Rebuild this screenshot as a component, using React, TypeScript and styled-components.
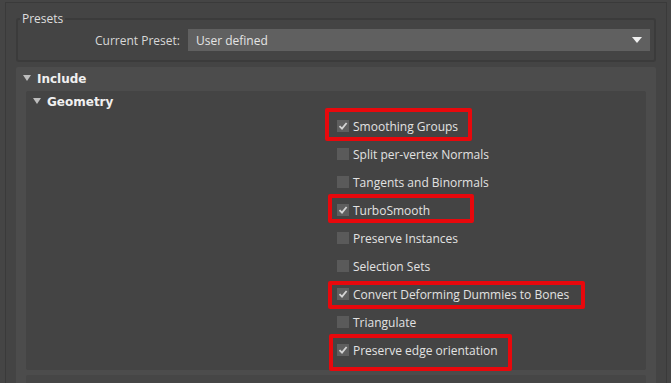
import React from "react";
import styled, { createGlobalStyle } from "styled-components";

const Global = createGlobalStyle`
  html, body { margin: 0; padding: 0; background: #444444; }
  body { font-family: "Open Sans", "Liberation Sans", sans-serif; }
  * { box-sizing: border-box; }
`;

const Page = styled.div`
  width: 671px;
  height: 383px;
  overflow: hidden;
  padding: 2px 4px 0 5px;
  background: #454545;
`;

const Frame = styled.div`
  height: 100%;
  border: 1px solid #3a3a3a;
  border-bottom: none;
  background: #444444;
  padding: 9px 10px 0 10px;
  display: flex;
  flex-direction: column;
  gap: 5px;
`;

const Group = styled.fieldset`
  margin: 0;
  padding: 3px 4px 9px 10px;
  border: 2px solid #3b3b3b;
  border-radius: 3px;
  min-width: 0;
`;

const Legend = styled.legend`
  color: #dedede;
  font-size: 12px;
  padding: 0 2px;
  margin-left: -8px;
  line-height: 14px;
`;

const PresetRow = styled.div`
  display: flex;
  align-items: center;
  gap: 8px;
  padding-left: 67px;
`;

const FieldLabel = styled.span`
  color: #d8d8d8;
  font-size: 12px;
`;

const Select = styled.div`
  flex: 1;
  height: 22px;
  background: #606060;
  display: flex;
  align-items: center;
  justify-content: space-between;
  padding: 0 8px 0 8px;
  color: #e4e4e4;
  font-size: 12px;
`;

const Rollout = styled.div<{ $bg: string }>`
  background: ${(p) => p.$bg};
  border-radius: 2px;
  display: flex;
  flex-direction: column;
`;

const IncludeBody = styled.div`
  padding: 0 10px;
  display: flex;
  flex-direction: column;
  gap: 5px;
`;

const Header = styled.div<{ $h: number; $pl: number }>`
  height: ${(p) => p.$h}px;
  display: flex;
  align-items: center;
  gap: 6px;
  padding-left: ${(p) => p.$pl}px;
  color: #f0f0f0;
  font-family: "DejaVu Sans", Verdana, sans-serif;
  font-weight: bold;
  font-size: 12px;
`;

const Tri = styled.span`
  width: 0;
  height: 0;
  border-left: 4px solid transparent;
  border-right: 4px solid transparent;
  border-top: 6px solid #bdbdbd;
  margin-top: -2px;
`;

const List = styled.div`
  display: flex;
  flex-direction: column;
  padding: 0 0 6px 311px;
`;

const Row = styled.div`
  position: relative;
  height: 28px;
  display: flex;
  align-items: center;
  gap: 4px;
  color: #e2e2e2;
  font-size: 12px;
`;

const Box = styled.span<{ $on: boolean }>`
  width: 12px;
  height: 12px;
  background: ${(p) => (p.$on ? "#5f5f5f" : "#5a5a5a")};
  display: flex;
  align-items: center;
  justify-content: center;
`;

const Mark = styled.div<{ $l: number; $t: number; $w: number; $h: number }>`
  position: absolute;
  left: ${(p) => p.$l}px;
  top: ${(p) => p.$t}px;
  width: ${(p) => p.$w}px;
  height: ${(p) => p.$h}px;
  border: 4px solid #e8080c;
  border-radius: 2px;
  pointer-events: none;
`;

const NextPanel = styled.div`
  height: 20px;
  background: #464646;
  border-radius: 2px;
`;

type Item = {
  label: string;
  on: boolean;
  mark?: [number, number, number, number];
};

const items: Item[] = [
  { label: "Smoothing Groups", on: true, mark: [-12, -4, 147, 33] },
  { label: "Split per-vertex Normals", on: false },
  { label: "Tangents and Binormals", on: false },
  { label: "TurboSmooth", on: true, mark: [-9, -2, 146, 29] },
  { label: "Preserve Instances", on: false },
  { label: "Selection Sets", on: false },
  { label: "Convert Deforming Dummies to Bones", on: true, mark: [-9, 1, 257, 28] },
  { label: "Triangulate", on: false },
  { label: "Preserve edge orientation", on: true, mark: [-8, -2, 183, 37] },
];

const Check = () => (
  <svg width="10" height="10" viewBox="0 0 10 10">
    <path d="M1.5 5.2 L4 7.6 L8.6 2" stroke="#d4d4d4" strokeWidth="1.8" fill="none" />
  </svg>
);

export default function App() {
  return (
    <Page>
      <Global />
      <Frame>
        <Group>
          <Legend>Presets</Legend>
          <PresetRow>
            <FieldLabel>Current Preset:</FieldLabel>
            <Select>
              <span>User defined</span>
              <svg width="10" height="7" viewBox="0 0 10 7">
                <path d="M0 0 H10 L5 6 Z" fill="#f0f0f0" />
              </svg>
            </Select>
          </PresetRow>
        </Group>
        <Rollout $bg="#4c4c4c">
          <Header $h={24} $pl={7}>
            <Tri />
            <span>Include</span>
          </Header>
          <IncludeBody>
            <Rollout $bg="#444444">
              <Header $h={21} $pl={7}>
                <Tri />
                <span>Geometry</span>
              </Header>
              <List>
                {items.map((it) => (
                  <Row key={it.label}>
                    <Box $on={it.on}>{it.on && <Check />}</Box>
                    <span>{it.label}</span>
                    {it.mark && (
                      <Mark $l={it.mark[0]} $t={it.mark[1]} $w={it.mark[2]} $h={it.mark[3]} />
                    )}
                  </Row>
                ))}
              </List>
            </Rollout>
            <NextPanel />
          </IncludeBody>
        </Rollout>
      </Frame>
    </Page>
  );
}
